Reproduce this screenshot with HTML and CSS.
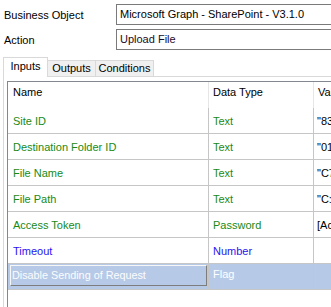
FILE: index.html
```html
<!DOCTYPE html>
<html lang="en">
<head>
    <meta charset="UTF-8">
    <meta name="viewport" content="width=device-width, initial-scale=1.0">
    <title>Action Inputs</title>
    <link rel="stylesheet" href="styles.css">
</head>
<body>
    <div class="form">
        <div class="field">
            <label>Business Object</label>
            <div class="box">Microsoft Graph - SharePoint - V3.1.0</div>
        </div>
        <div class="field">
            <label>Action</label>
            <div class="box action">Upload File</div>
        </div>
    </div>

    <div class="tabs">
        <div class="tab active">Inputs</div>
        <div class="tab">Outputs</div>
        <div class="tab">Conditions</div>
    </div>

    <div class="page">
        <div class="grid">
            <div class="row head">
                <div class="cell">Name</div>
                <div class="cell">Data Type</div>
                <div class="cell">Value</div>
            </div>
            <div class="row text">
                <div class="cell">Site ID</div>
                <div class="cell">Text</div>
                <div class="cell val">"83b6e1f2-4c1a-4d0e</div>
            </div>
            <div class="row text">
                <div class="cell">Destination Folder ID</div>
                <div class="cell">Text</div>
                <div class="cell val">"01TQ7ZK3ALQ5</div>
            </div>
            <div class="row text">
                <div class="cell">File Name</div>
                <div class="cell">Text</div>
                <div class="cell val">"C7 Report.xlsx"</div>
            </div>
            <div class="row text">
                <div class="cell">File Path</div>
                <div class="cell">Text</div>
                <div class="cell val">"C:\Temp\"</div>
            </div>
            <div class="row text">
                <div class="cell">Access Token</div>
                <div class="cell">Password</div>
                <div class="cell val">[Access Token]</div>
            </div>
            <div class="row number">
                <div class="cell">Timeout</div>
                <div class="cell">Number</div>
                <div class="cell val"></div>
            </div>
            <div class="row selected">
                <div class="cell"><div class="edit">Disable Sending of Request</div></div>
                <div class="cell flag">Flag</div>
                <div class="cell val"></div>
            </div>
        </div>
    </div>
</body>
</html>
```

FILE: styles.css
```css
body {
    margin: 0;
    width: 331px;
    height: 307px;
    overflow: hidden;
    font-family: "Liberation Sans", Arial, sans-serif;
    font-size: 11px;
    color: #000;
    background: #fff;
}
.form {
    display: flex;
    flex-direction: column;
    gap: 4px;
    padding: 4px 0 0 4px;
}
.field {
    display: flex;
    align-items: center;
    height: 21px;
}
.field label {
    width: 112px;
    flex: none;
}
.box {
    flex: none;
    width: 240px;
    height: 21px;
    box-sizing: border-box;
    border: 1px solid #7a7a7a;
    padding: 0 3px;
    line-height: 19px;
    white-space: nowrap;
}
.box.action {
    color: #1a0a2a;
}
.tabs {
    display: flex;
    align-items: flex-end;
    height: 19px;
    margin-top: 7px;
    padding-left: 3px;
}
.tab {
    height: 16px;
    box-sizing: border-box;
    border: 1px solid #d9d9d9;
    border-bottom: none;
    border-left: none;
    background: #f0f0f0;
    line-height: 15px;
    text-align: center;
}
.tab:nth-child(2) {
    width: 48px;
}
.tab:nth-child(3) {
    width: 58px;
}
.tab.active {
    position: relative;
    z-index: 1;
    width: 45px;
    height: 20px;
    margin-bottom: -1px;
    border-left: 1px solid #d9d9d9;
    background: #fff;
    line-height: 16px;
}
.page {
    width: 400px;
    height: 260px;
    margin-left: 3px;
    border: 1px solid #d9d9d9;
    padding: 4px 0 0 3px;
}
.grid {
    height: 100%;
    border-top: 1px solid #828790;
    border-left: 1px solid #828790;
}
.row {
    display: grid;
    grid-template-columns: 201px 105px 80px;
    height: 26px;
    box-sizing: border-box;
    border-bottom: 1px solid #c6c6c6;
}
.cell {
    display: flex;
    align-items: center;
    padding-left: 5px;
    border-right: 1px solid #c6c6c6;
    white-space: nowrap;
    overflow: hidden;
}
.cell + .cell {
    padding-left: 4px;
}
.cell.val {
    padding-left: 3px;
    color: #000;
}
.row.head {
    border-bottom: none;
}
.row.head .cell {
    align-items: flex-start;
    padding-top: 3px;
    line-height: 14px;
    border-right-color: #e6e6e6;
}
.row.text {
    color: #178a17;
}
.row.number {
    color: #2a14f0;
}
.row.selected {
    background: #b6cae8;
}
.row.selected .cell:first-child {
    align-items: flex-start;
    padding: 1px 0 0 2px;
}
.edit {
    width: 197px;
    height: 21px;
    box-sizing: border-box;
    border: 1px solid;
    border-color: #f6f6f6 #7d7d7d #7d7d7d #f6f6f6;
    padding-left: 1px;
    line-height: 19px;
    font-size: 10.8px;
    color: #fcfcfc;
}
.cell.flag {
    align-items: flex-start;
    padding-top: 3px;
    line-height: 14px;
    color: #fff;
}
```
